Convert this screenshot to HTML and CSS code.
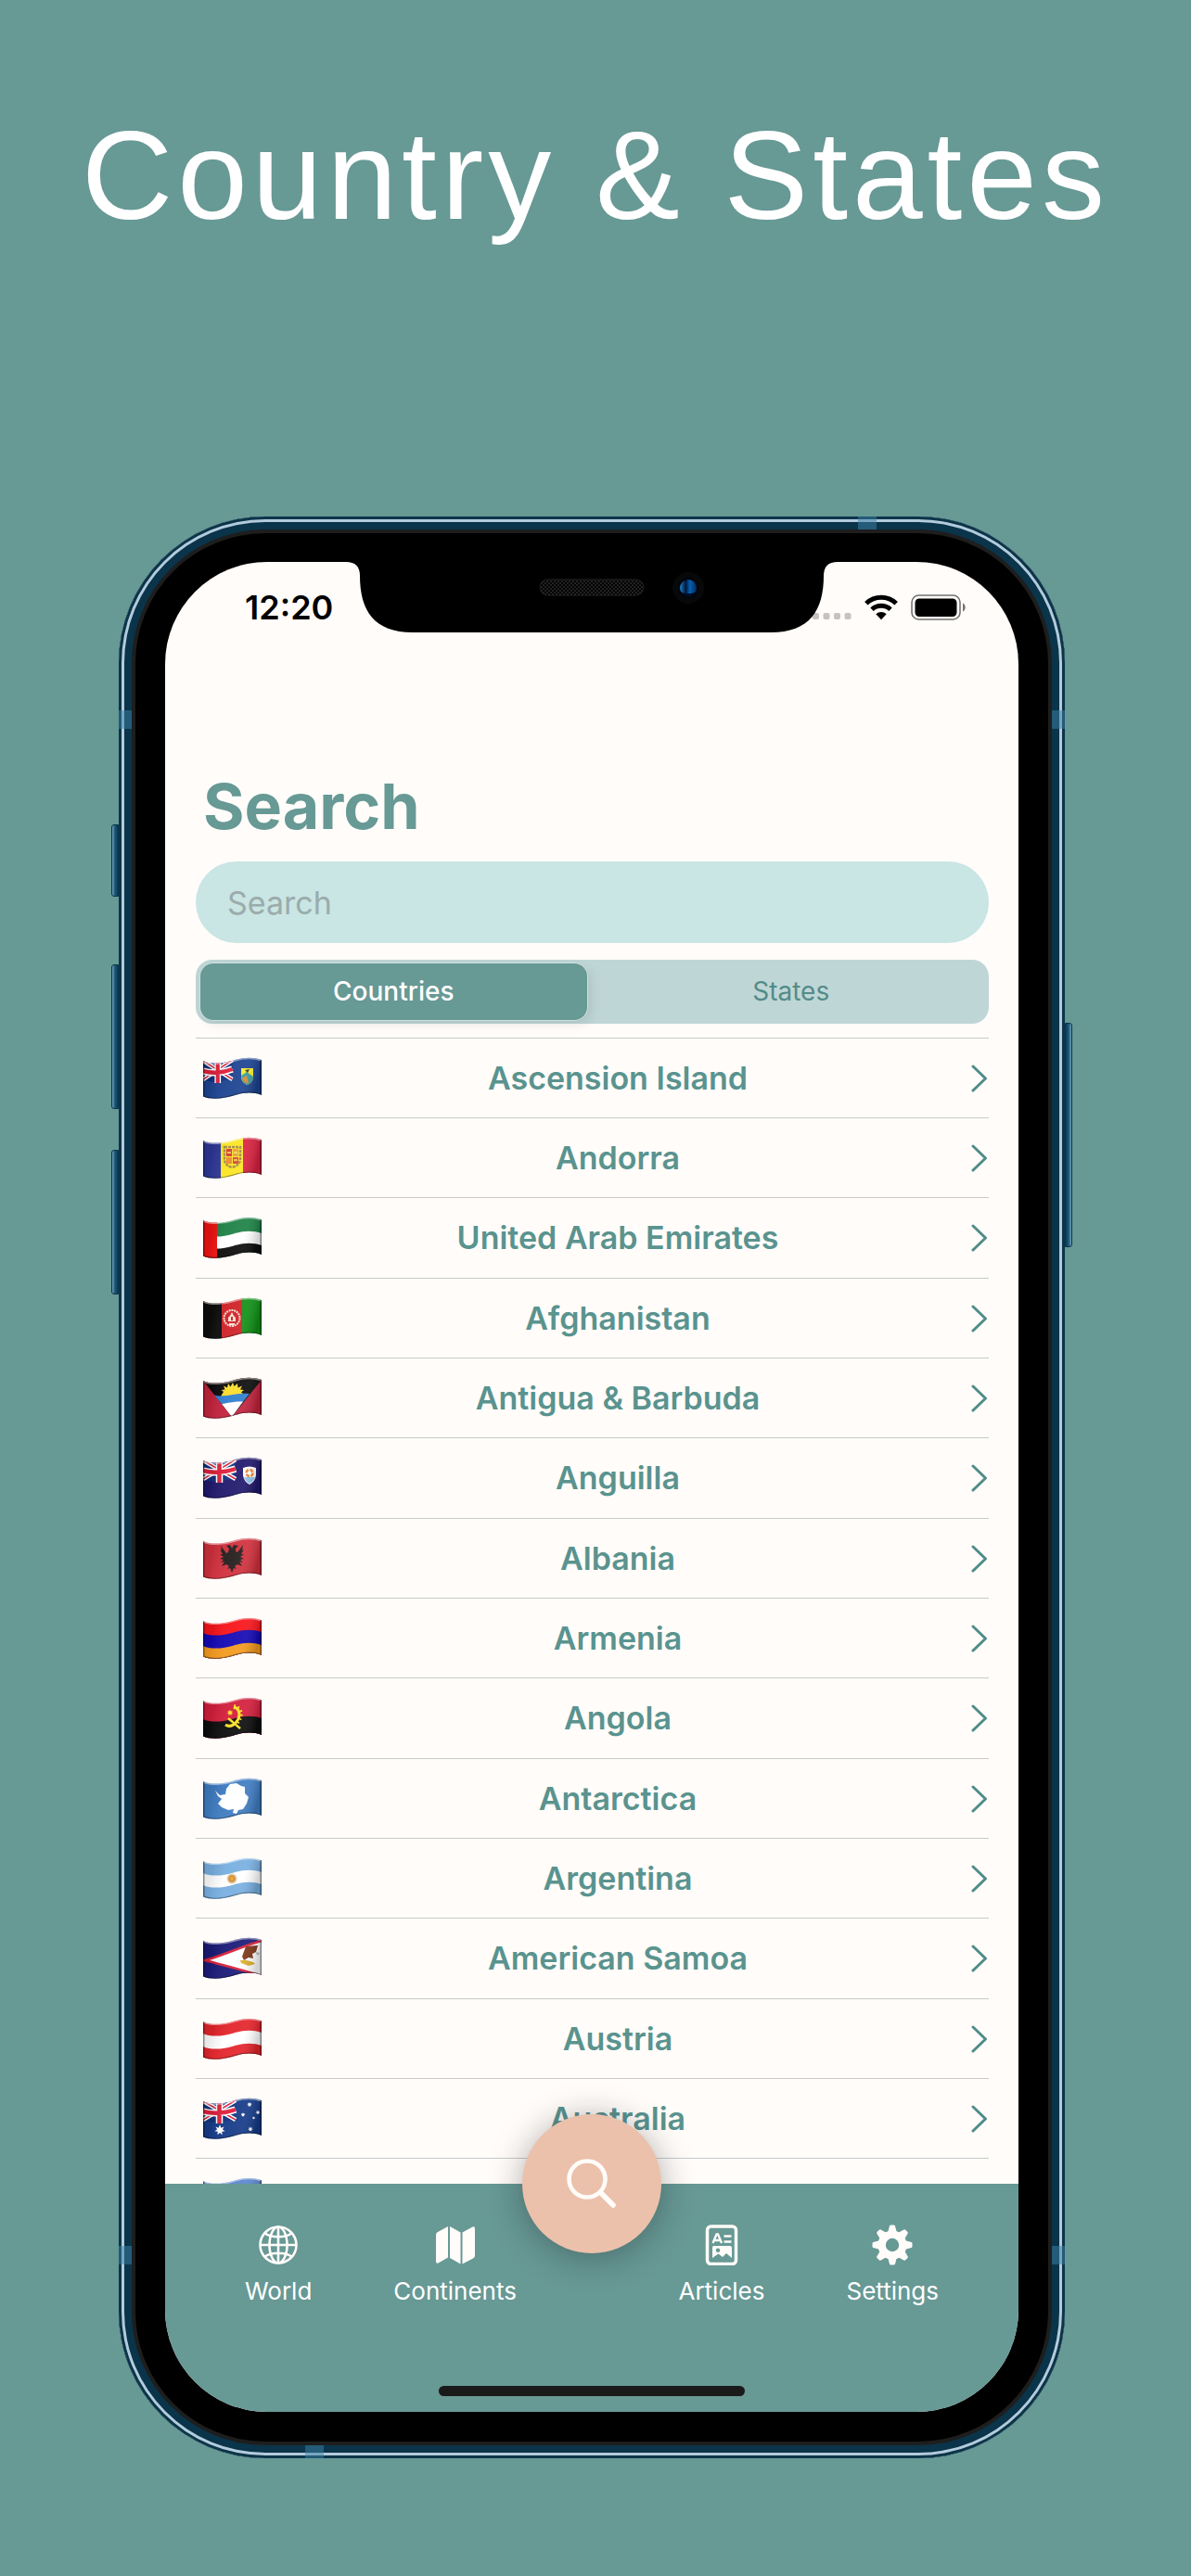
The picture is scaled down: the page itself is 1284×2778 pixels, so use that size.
FILE: index.html
```html
<!DOCTYPE html>
<html lang="en">
<head>
<meta charset="utf-8">
<meta name="viewport" content="width=device-width, initial-scale=1">
<title>Country &amp; States</title>
<link rel="stylesheet" href="styles.css">
</head>
<body>
<svg class="defs" width="0" height="0" aria-hidden="true">
  <defs>
    <!-- One band of cloth: wavy top edge, open bottom -->
    <path id="wave" d="M0 4C8 8 22 7 33 3.500C44 0 54 0 63 3V70H0Z"/>
    <path id="cloth" d="M0 4C8 8 22 7 33 3.500C44 0 54 0 63 3V41C54 37.500 44 38 33 41.500C22 45 8 46 0 42.500Z"/>
    <clipPath id="flag-clip"><use href="#cloth"/></clipPath>
    <linearGradient id="fold" x1="0" x2="1" y1="0" y2="0.150">
      <stop offset="0" stop-color="#000" stop-opacity="0.120"/>
      <stop offset="0.200" stop-color="#000" stop-opacity="0.080"/>
      <stop offset="0.450" stop-color="#fff" stop-opacity="0.050"/>
      <stop offset="0.750" stop-color="#fff" stop-opacity="0.080"/>
      <stop offset="1" stop-color="#000" stop-opacity="0.180"/>
    </linearGradient>
    <g id="shade">
      <use href="#cloth" fill="url(#fold)"/>
      <path d="M0 4C8 8 22 7 33 3.500C44 0 54 0 63 3" fill="none" stroke="#fff" stroke-opacity="0.450" stroke-width="3"/>
      <path d="M0.500 4V42.500C8 46 22 45 33 41.500C44 38 54 37.500 62.500 41V3" fill="none" stroke="#000" stroke-opacity="0.400" stroke-width="2"/>
    </g>
    <g id="union">
      <path d="M0 4C8 8 22 7 35 2.500V23C22 27 8 28 0 24Z" fill="#12307c"/>
      <path d="M0 4L35 24M0 24L35 3" stroke="#fff" stroke-width="4.500"/>
      <path d="M0 4L35 24M0 24L35 3" stroke="#d8213b" stroke-width="1.500"/>
      <path d="M17.500 4V28M0 15C10 18 24 17 35 13" stroke="#fff" stroke-width="7.500" fill="none"/>
      <path d="M17.500 4V28M0 15C10 18 24 17 35 13" stroke="#e0203c" stroke-width="4.500" fill="none"/>
    </g>
    <path id="star" d="M0-5L1.200-2 4-3 2.500-.5 5 1 2 1.500 2.200 4.500 0 2.600-2.200 4.500-2 1.500-5 1-2.500-.5-4-3-1.200-2Z"/>
  </defs>
</svg>

<div class="poster">
  <h1 class="poster-title">Country &amp; States</h1>

  <div class="phone">
    <span class="side-key side-key-mute"></span>
    <span class="side-key side-key-up"></span>
    <span class="side-key side-key-down"></span>
    <span class="side-key side-key-power"></span>
    <span class="band band-left band-upper"></span>
    <span class="band band-right band-upper"></span>
    <span class="band band-left band-lower"></span>
    <span class="band band-right band-lower"></span>
    <span class="band band-top"></span>
    <span class="band band-bottom"></span>

    <div class="screen">
      <header class="status">
        <span class="clock">12:20</span>
        <div class="status-icons">
          <svg class="signal" width="42" height="28" viewBox="0 0 42 28" fill="#c4c3c2" aria-hidden="true">
            <rect x="0" y="20" width="7" height="7" rx="2"/><rect x="11.500" y="20" width="7" height="7" rx="2"/><rect x="23" y="20" width="7" height="7" rx="2"/><rect x="34.500" y="20" width="7" height="7" rx="2"/>
          </svg>
          <svg class="wifi" width="36" height="28" viewBox="0 0 36 28" aria-hidden="true">
            <g fill="none" stroke="#000" stroke-width="5">
              <path d="M1.800 9.800A23.500 23.500 0 0 1 34.200 9.800"/>
              <path d="M8 16.300A14.600 14.600 0 0 1 28 16.300"/>
            </g>
            <path d="M12.300 21.200A8.200 8.200 0 0 1 23.700 21.200L18 27.200Z"/>
          </svg>
          <svg class="battery" width="60" height="28" viewBox="0 0 60 28" aria-hidden="true">
            <rect x="1" y="1" width="52" height="26" rx="7.500" fill="none" stroke="#747373" stroke-width="1.600"/>
            <rect x="4.500" y="4.500" width="45" height="19.500" rx="4.500"/>
            <path d="M56 9.500C59.500 11 59.500 17 56 18.500Z" fill="#747373"/>
          </svg>
        </div>
        <svg class="notch" width="530" height="76" viewBox="0 0 530 76" aria-hidden="true">
          <defs>
            <pattern id="mesh" width="4" height="4" patternUnits="userSpaceOnUse"><path d="M0 0H2V2H0ZM2 2H4V4H2Z" fill="#222"/></pattern>
            <linearGradient id="lens" x1="0" x2="1"><stop offset="0" stop-color="#1583cf"/><stop offset="0.350" stop-color="#021536"/><stop offset="0.600" stop-color="#0461b4"/><stop offset="1" stop-color="#022a5c"/></linearGradient>
          </defs>
          <path d="M0 0H530C520 0 515 5 515 15C515 52 500 76 458 76H72C30 76 15 52 15 15C15 5 10 0 0 0Z"/>
          <rect x="209" y="19" width="112" height="17" rx="8.500" fill="url(#mesh)" stroke="#222" stroke-width="1"/>
          <circle cx="369" cy="28" r="17" fill="#07080a"/>
          <circle cx="369" cy="28" r="11" fill="#02040c"/>
          <circle cx="369" cy="28" r="9" fill="url(#lens)"/>
          <path d="M361 32A9 9 0 0 0 377 32C373 35 365 35 361 32Z" fill="#010a22"/>
        </svg>
      </header>

      <main class="content">
        <h2 class="page-title">Search</h2>
        <input class="search-field" type="search" placeholder="Search" aria-label="Search">
        <div class="segments" role="radiogroup" aria-label="Show">
          <label class="segment"><input type="radio" name="scope" checked><span>Countries</span></label>
          <label class="segment"><input type="radio" name="scope"><span>States</span></label>
        </div>

        <ul class="countries">
          <li><a class="country" href="#ascension-island">
            <svg class="flag" viewBox="0 0 63 46" aria-hidden="true"><g clip-path="url(#flag-clip)"><rect width="63" height="46" fill="#1c4290"/><use href="#union" transform="scale(.9 1)"/><path d="M41 12H54V22Q53 28 47.500 30Q42 28 41 22Z" fill="#f6ea2c"/><path d="M41 20L47 16 54 21Q53 28 47.500 30Q42 28 41 20Z" fill="#3a9ba0"/><path d="M42 23L47 20 49 28H46Z" fill="#e28b2e"/><path d="M45 14L50 13 48 17Z" fill="#333"/><use href="#shade"/></g></svg>
            <span class="country-name">Ascension Island</span>
            <svg class="chevron" viewBox="0 0 20 30" aria-hidden="true"><path d="M3 2L16.500 15 3 28"/></svg></a></li>
          <li><a class="country" href="#andorra">
            <svg class="flag" viewBox="0 0 63 46" aria-hidden="true"><g clip-path="url(#flag-clip)"><rect width="20" height="46" fill="#2c3694"/><rect x="19" width="24" height="46" fill="#fbe522"/><rect x="43" width="20" height="46" fill="#d9213f"/><path d="M23 11H40V25Q39 31 31 33Q24 31 23 25Z" fill="none" stroke="#a58a48" stroke-width="2.500" stroke-dasharray="3 1"/><rect x="25" y="13" width="6" height="8" fill="#d83a3a"/><rect x="32" y="13" width="6" height="8" fill="#e9a13c"/><rect x="25" y="22" width="6" height="7" fill="#eb8a32"/><rect x="32" y="22" width="6" height="7" fill="#d8483a"/><path d="M26 17H30M33 17H37M33 25H37" stroke="#f8e36a" stroke-width="1.500"/><use href="#shade"/></g></svg>
            <span class="country-name">Andorra</span>
            <svg class="chevron" viewBox="0 0 20 30" aria-hidden="true"><path d="M3 2L16.500 15 3 28"/></svg></a></li>
          <li><a class="country" href="#united-arab-emirates">
            <svg class="flag" viewBox="0 0 63 46" aria-hidden="true"><g clip-path="url(#flag-clip)"><use href="#wave" fill="#1d8145"/><use href="#wave" y="15" fill="#fff"/><use href="#wave" y="28" fill="#0c0c0c"/><rect width="15" height="46" fill="#ee1212"/><use href="#shade"/></g></svg>
            <span class="country-name">United Arab Emirates</span>
            <svg class="chevron" viewBox="0 0 20 30" aria-hidden="true"><path d="M3 2L16.500 15 3 28"/></svg></a></li>
          <li><a class="country" href="#afghanistan">
            <svg class="flag" viewBox="0 0 63 46" aria-hidden="true"><g clip-path="url(#flag-clip)"><rect width="21" height="46" fill="#0c0c0c"/><rect x="20" width="23" height="46" fill="#cf2027"/><rect x="42" width="21" height="46" fill="#109016"/><circle cx="31" cy="22.500" r="8.500" fill="none" stroke="#f3d9c8" stroke-width="2" stroke-dasharray="2 .8"/><path d="M27 26V22L29 20 31 16 33 20 35 22V26ZM28 28H34V30H28Z" fill="#f5dfd2"/><rect x="30" y="21" width="2" height="4" fill="#cf2027"/><use href="#shade"/></g></svg>
            <span class="country-name">Afghanistan</span>
            <svg class="chevron" viewBox="0 0 20 30" aria-hidden="true"><path d="M3 2L16.500 15 3 28"/></svg></a></li>
          <li><a class="country" href="#antigua-barbuda">
            <svg class="flag" viewBox="0 0 63 46" aria-hidden="true"><g clip-path="url(#flag-clip)"><rect width="63" height="46" fill="#c2223c"/><path d="M0 4L31 43 63 3V-4H0Z" fill="#0c0c0c"/><path d="M20 19L22 16 19.500 14 23.500 13.500 22 9.500 26 11.500 27 7 29.500 10.500 32 6 33.500 10 37 7 37.500 11.500 42 9.500 40 13.500 44 14 41 16.500 43 18V22H19Z" fill="#fbdc2a"/><path d="M12 19.500C22 23 36 16 50 18L42 28C34 27 28 28 20 29Z" fill="#2f7fd0"/><path d="M20 29C28 28 34 26 43 26.500L31 43Z" fill="#fff"/><use href="#shade"/></g></svg>
            <span class="country-name">Antigua &amp; Barbuda</span>
            <svg class="chevron" viewBox="0 0 20 30" aria-hidden="true"><path d="M3 2L16.500 15 3 28"/></svg></a></li>
          <li><a class="country" href="#anguilla">
            <svg class="flag" viewBox="0 0 63 46" aria-hidden="true"><g clip-path="url(#flag-clip)"><rect width="63" height="46" fill="#20186c"/><use href="#union"/><path d="M43 12Q50 9 57 12V20Q56 27 50 30Q44 27 43 20Z" fill="#fff"/><path d="M44 22H56Q54 27 50 29Q46 27 44 22Z" fill="#8fc5ee"/><circle cx="50" cy="17.500" r="3.500" fill="none" stroke="#ec8a34" stroke-width="2.500" stroke-dasharray="4 1.500"/><use href="#shade"/></g></svg>
            <span class="country-name">Anguilla</span>
            <svg class="chevron" viewBox="0 0 20 30" aria-hidden="true"><path d="M3 2L16.500 15 3 28"/></svg></a></li>
          <li><a class="country" href="#albania">
            <svg class="flag" viewBox="0 0 63 46" aria-hidden="true"><g clip-path="url(#flag-clip)"><rect width="63" height="46" fill="#d0303c"/><path d="M31 12L29 8 25 9 28 12 27 16 25 17 19 9 20 14 18 13 21 18 18 18 22 21 18 23 22 24 19 27 23 26 20 31 25 29 28 31 26 34 29 33 31 38 33 33 36 34 34 31 37 29 42 31 39 26 43 27 40 24 44 23 40 21 44 18 41 18 44 13 42 14 43 8 37 16 35 15 35 12 38 9 33 8Z" fill="#241c1c"/><use href="#shade"/></g></svg>
            <span class="country-name">Albania</span>
            <svg class="chevron" viewBox="0 0 20 30" aria-hidden="true"><path d="M3 2L16.500 15 3 28"/></svg></a></li>
          <li><a class="country" href="#armenia">
            <svg class="flag" viewBox="0 0 63 46" aria-hidden="true"><g clip-path="url(#flag-clip)"><use href="#wave" fill="#f7141a"/><use href="#wave" y="13" fill="#1408b4"/><use href="#wave" y="27" fill="#f39a1d"/><use href="#shade"/></g></svg>
            <span class="country-name">Armenia</span>
            <svg class="chevron" viewBox="0 0 20 30" aria-hidden="true"><path d="M3 2L16.500 15 3 28"/></svg></a></li>
          <li><a class="country" href="#angola">
            <svg class="flag" viewBox="0 0 63 46" aria-hidden="true"><g clip-path="url(#flag-clip)"><use href="#wave" fill="#d31e3c"/><use href="#wave" y="20" fill="#0c0c0c"/><path d="M33 11C40 12 41 22 35 28C31 32 27 32 24 30" fill="none" stroke="#f9df22" stroke-width="3"/><path d="M33 10.500C42 12 42 22 36 28" fill="none" stroke="#f9df22" stroke-width="5" stroke-dasharray="1.500 2.500"/><path d="M27 23L40 34" stroke="#f9df22" stroke-width="2.500"/><use href="#star" transform="translate(29 17) scale(.7)" fill="#f9df22"/><use href="#shade"/></g></svg>
            <span class="country-name">Angola</span>
            <svg class="chevron" viewBox="0 0 20 30" aria-hidden="true"><path d="M3 2L16.500 15 3 28"/></svg></a></li>
          <li><a class="country" href="#antarctica">
            <svg class="flag" viewBox="0 0 63 46" aria-hidden="true"><g clip-path="url(#flag-clip)"><rect width="63" height="46" fill="#3f7cc2"/><path d="M13 14L18 19 24 18 25 12 29 7 36 6 41 9 45 10 45 17 49 21 47 28 43 34 38 35 36 39 32 38 33 34 27 35 20 32 16 28 20 23 16 20Z" fill="#fff"/><use href="#shade"/></g></svg>
            <span class="country-name">Antarctica</span>
            <svg class="chevron" viewBox="0 0 20 30" aria-hidden="true"><path d="M3 2L16.500 15 3 28"/></svg></a></li>
          <li><a class="country" href="#argentina">
            <svg class="flag" viewBox="0 0 63 46" aria-hidden="true"><g clip-path="url(#flag-clip)"><use href="#wave" fill="#78afe0"/><use href="#wave" y="13" fill="#fff"/><use href="#wave" y="26" fill="#78afe0"/><circle cx="31" cy="23" r="5.500" fill="#e5c9a0"/><circle cx="31" cy="23" r="3.200" fill="#e8a02c" stroke="#b8752a"/><use href="#shade"/></g></svg>
            <span class="country-name">Argentina</span>
            <svg class="chevron" viewBox="0 0 20 30" aria-hidden="true"><path d="M3 2L16.500 15 3 28"/></svg></a></li>
          <li><a class="country" href="#american-samoa">
            <svg class="flag" viewBox="0 0 63 46" aria-hidden="true"><g clip-path="url(#flag-clip)"><rect width="63" height="46" fill="#1a1a78"/><path d="M2 25C24 19 44 9 66 3V43C46 36 24 31 2 25Z" fill="#fff" stroke="#d8203a" stroke-width="2.500"/><path d="M46 10L59 9 57 16 53 18 54 23 49 22 44 25 42 21Z" fill="#7c3417"/><path d="M40 25H47L54 27 56 29 49 31 41 28Z" fill="#dcae2a"/><path d="M56 16L61 17 59 20Z" fill="#b9b9b9"/><use href="#shade"/></g></svg>
            <span class="country-name">American Samoa</span>
            <svg class="chevron" viewBox="0 0 20 30" aria-hidden="true"><path d="M3 2L16.500 15 3 28"/></svg></a></li>
          <li><a class="country" href="#austria">
            <svg class="flag" viewBox="0 0 63 46" aria-hidden="true"><g clip-path="url(#flag-clip)"><use href="#wave" fill="#e3242b"/><use href="#wave" y="13" fill="#fff"/><use href="#wave" y="27" fill="#e3242b"/><use href="#shade"/></g></svg>
            <span class="country-name">Austria</span>
            <svg class="chevron" viewBox="0 0 20 30" aria-hidden="true"><path d="M3 2L16.500 15 3 28"/></svg></a></li>
          <li><a class="country" href="#australia">
            <svg class="flag" viewBox="0 0 63 46" aria-hidden="true"><g clip-path="url(#flag-clip)"><rect width="63" height="46" fill="#153a88"/><use href="#union"/><g fill="#fff"><use href="#star" transform="translate(18 35) scale(1.150)"/><use href="#star" transform="translate(50 7.500) scale(.55)"/><use href="#star" transform="translate(43 18.500) scale(.5)"/><use href="#star" transform="translate(59 16) scale(.5)"/><use href="#star" transform="translate(51 34) scale(.55)"/><circle cx="54.500" cy="22" r="1.200"/></g><use href="#shade"/></g></svg>
            <span class="country-name">Australia</span>
            <svg class="chevron" viewBox="0 0 20 30" aria-hidden="true"><path d="M3 2L16.500 15 3 28"/></svg></a></li>
          <li><div class="country">
            <svg class="flag" viewBox="0 0 63 46" aria-hidden="true"><g clip-path="url(#flag-clip)"><use href="#wave" fill="#5b86cf"/><use href="#shade"/></g></svg></div></li>
        </ul>
      </main>

      <nav class="tabbar" aria-label="Main">
        <div class="tabs">
          <div class="tab-group">
            <a class="tab" href="#world">
              <svg class="tab-icon" viewBox="0 0 44 44" fill="none" stroke="#fffcf9" stroke-width="2.600" aria-hidden="true"><circle cx="22" cy="22" r="19.500"/><ellipse cx="22" cy="22" rx="9.500" ry="19.500"/><path d="M22 2.500V41.500M2.500 22H41.500M7.500 9.500C15 14.500 29 14.500 36.500 9.500M7.500 34.500C15 29.500 29 29.500 36.500 34.500"/></svg>
              <span>World</span></a>
            <a class="tab" href="#continents">
              <svg class="tab-icon" viewBox="0 0 44 44" fill="#fffcf9" aria-hidden="true"><path d="M14 2V35.500L3.500 41.500Q1 42.500 1 39.500V11Q1 9 3 8ZM16 2L27.500 8.500V42.500L16 36ZM29.500 8.500L40.500 2.500Q43 1.500 43 4.500V33.500Q43 35.500 41 36.500L29.500 42.500Z"/></svg>
              <span>Continents</span></a>
          </div>
          <div class="tab-group">
            <a class="tab" href="#articles">
              <svg class="tab-icon" viewBox="0 0 44 44" aria-hidden="true"><rect x="6.500" y="2" width="31" height="40.500" rx="4" fill="none" stroke="#fffcf9" stroke-width="3.500"/><path d="M12.500 20L16.500 10.500H18L22 20M14 17H20.500" fill="none" stroke="#fffcf9" stroke-width="2.300"/><path d="M24.500 12.500H32.500M24.500 18.500H32.500" stroke="#fffcf9" stroke-width="2.300"/><path fill-rule="evenodd" d="M13.500 23H31Q33 23 33 25V36L27 31 23 35 18.500 31.500 12 36V25Q12 23 13.500 23ZM18 25.500A2.200 2.200 0 1 0 18 30A2.200 2.200 0 1 0 18 25.500Z" fill="#fffcf9"/></svg>
              <span>Articles</span></a>
            <a class="tab" href="#settings">
              <svg class="tab-icon" viewBox="0 0 44 44" aria-hidden="true"><g fill="#fffcf9"><g id="teeth"><path id="tooth" d="M17 9L19 1.500Q19.300.5 20.500.5H23.500Q24.700.5 25 1.500L27 9V35L25 42.500Q24.700 43.500 23.500 43.500H20.500Q19.300 43.500 19 42.500L17 35Z"/><use href="#tooth" transform="rotate(90 22 22)"/></g><use href="#teeth" transform="rotate(45 22 22)"/><circle cx="22" cy="22" r="15.500"/></g><circle cx="22" cy="22" r="7.200" fill="#679995"/></svg>
              <span>Settings</span></a>
          </div>
        </div>
        <button class="search-button" type="button" aria-label="Search">
          <svg width="58" height="58" viewBox="0 0 58 58" fill="none" stroke="#fffcf9" stroke-linecap="round" aria-hidden="true"><circle cx="24" cy="24" r="19.500" stroke-width="4.600"/><path d="M38.500 38.500L52 52" stroke-width="5.600"/></svg>
        </button>
        <div class="home-indicator"></div>
      </nav>
    </div>
  </div>
</div>
</body>
</html>
```
FILE: styles.css
```css
:root {
  --teal: #679995;
  --teal-text: #5a938f;
  --paper: #fffcf9;
}

* {
  box-sizing: border-box;
}

body {
  margin: 0;
  background: var(--teal);
  font-family: Inter, "Liberation Sans", sans-serif;
}

.defs {
  position: absolute;
}

.poster {
  min-height: 100vh;
  padding: 113px 136px 127px 128px;
}

.poster-title {
  margin: 0 -136px 292px -128px;
  font-family: "Liberation Sans", Arial, sans-serif;
  font-size: 136px;
  font-weight: 400;
  line-height: 152px;
  letter-spacing: 5px;
  color: #fff;
  text-align: center;
  white-space: nowrap;
}

/* Handset */

.phone {
  position: relative;
  padding: 49px 50px 50px;
  border-radius: 158px;
  background: #000;
  box-shadow:
    inset 0 0 0 3px #0b3549,
    inset 0 0 0 6px #b3cbdc,
    inset 0 0 0 14px #0a3449,
    inset 0 0 0 18px #1e1e1e;
}

.side-key {
  position: absolute;
  left: -8px;
  width: 8px;
  border: 1px solid #0a3449;
  border-radius: 3px 0 0 3px;
  background: linear-gradient(90deg, #6fa3ba, #1b5674 50%, #0d3d58);
}

.side-key-mute {
  top: 332px;
  height: 78px;
}

.side-key-up {
  top: 483px;
  height: 156px;
}

.side-key-down {
  top: 683px;
  height: 156px;
}

.side-key-power {
  top: 546px;
  left: 100%;
  height: 242px;
  border-radius: 0 3px 3px 0;
  background: linear-gradient(270deg, #6fa3ba, #1b5674 50%, #0d3d58);
}

.band {
  position: absolute;
  width: 14px;
  height: 20px;
  background: rgba(60, 130, 168, 0.5);
}

.band-left {
  left: 0;
}

.band-right {
  right: 0;
}

.band-upper {
  top: 209px;
}

.band-lower {
  bottom: 209px;
}

.band-top,
.band-bottom {
  width: 20px;
  height: 14px;
}

.band-top {
  top: 0;
  right: 203px;
}

.band-bottom {
  bottom: 0;
  left: 201px;
}

.screen {
  overflow: hidden;
  border-radius: 110px;
  background: var(--paper);
}

/* Status bar */

.status {
  position: relative;
  display: flex;
  align-items: center;
  justify-content: space-between;
  height: 98px;
  padding: 0 56px 0 86px;
}

.clock {
  font-size: 36px;
  font-weight: 600;
  line-height: 44px;
  color: #000;
}

.status-icons {
  display: flex;
  gap: 14px;
}

.notch {
  position: absolute;
  top: 0;
  left: 50%;
  transform: translateX(-50%);
}

/* Search page */

.content {
  padding: 125px 32px 0 33px;
}

.page-title {
  margin: 0 0 20px;
  padding-left: 8px;
  font-size: 68px;
  font-weight: 700;
  line-height: 80px;
  color: var(--teal);
}

.search-field {
  display: block;
  width: 100%;
  height: 88px;
  margin: 0 0 18px;
  padding: 0 34px;
  border: 0;
  border-radius: 44px;
  background: #c9e5e4;
  font: 400 34px/44px Inter, "Liberation Sans", sans-serif;
  color: var(--teal-text);
  appearance: none;
}

.search-field::placeholder {
  color: #9aacab;
  opacity: 1;
}

.segments {
  display: flex;
  gap: 12px;
  height: 69px;
  margin-bottom: 15px;
  padding: 4px 5px;
  border-radius: 18px;
  background: #bfd6d7;
}

.segment {
  display: flex;
  flex: 1;
}

.segment input {
  position: absolute;
  opacity: 0;
}

.segment span {
  flex: 1;
  border-radius: 14px;
  font-size: 28px;
  font-weight: 400;
  line-height: 61px;
  text-align: center;
  color: #528c88;
}

.segment input:checked + span {
  background: var(--teal);
  box-shadow: 0 0 0 1px #cfe0df, 4px 4px 12px rgba(0, 0, 0, 0.1);
  font-weight: 500;
  color: #fff;
}

/* The last row runs under the tab bar */
.countries {
  display: grid;
  grid-auto-rows: 86px 86px 87px;
  height: 1236px;
  margin: 0;
  padding: 0;
  overflow: hidden;
  list-style: none;
}

.country {
  display: flex;
  align-items: center;
  height: 100%;
  padding-left: 8px;
  border-top: 1px solid #c8cacb;
  color: var(--teal-text);
  text-decoration: none;
}

.flag {
  flex: none;
  width: 63px;
  height: 46px;
  margin-right: 4px;
}

.country-name {
  flex: 1;
  font-size: 34px;
  font-weight: 600;
  line-height: 44px;
  text-align: center;
}

.chevron {
  flex: none;
  width: 20px;
  height: 30px;
  fill: none;
  stroke: #4f8c88;
  stroke-width: 3px;
  stroke-linecap: round;
  stroke-linejoin: round;
}

/* Tab bar */

.tabbar {
  position: relative;
  padding: 44px 0 17px;
  background: var(--teal);
}

.tabs {
  display: flex;
  justify-content: space-between;
  padding: 0 86px;
}

.tab-group {
  display: flex;
  gap: 88px;
}

.tab {
  display: flex;
  flex-direction: column;
  align-items: center;
  gap: 12px;
  font-size: 26px;
  line-height: 32px;
  color: #fff;
  text-decoration: none;
}

.tab-icon {
  width: 44px;
  height: 44px;
}

.search-button {
  position: absolute;
  top: -75px;
  left: 50%;
  display: grid;
  place-items: center;
  width: 150px;
  height: 150px;
  padding: 0;
  border: 0;
  border-radius: 50%;
  background: #ebc1ab;
  box-shadow: 0 4px 36px rgba(20, 20, 30, 0.35);
  transform: translateX(-50%);
}

.home-indicator {
  width: 330px;
  height: 11px;
  margin: 86px auto 0;
  border-radius: 6px;
  background: #1a1a1a;
}
```
